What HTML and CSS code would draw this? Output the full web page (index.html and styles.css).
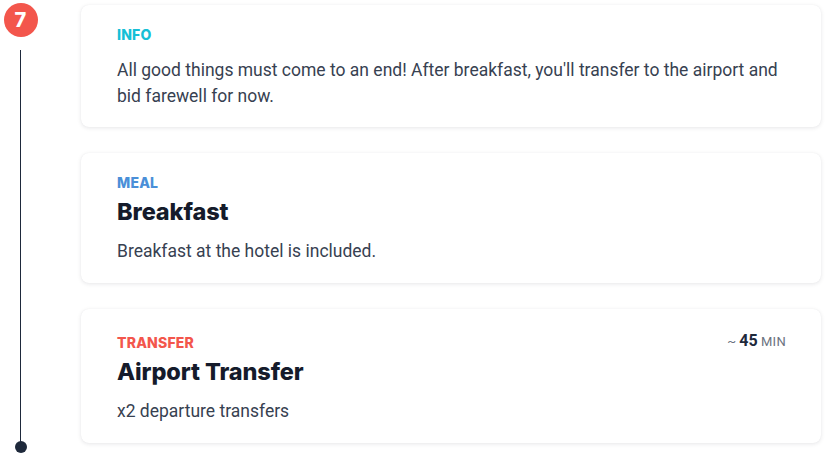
FILE: index.html
```html
<!DOCTYPE html>
<html>
<head>
<meta charset="utf-8">
<link rel="stylesheet" href="styles.css">
</head>
<body>
<div class="day">
  <div class="timeline">
    <div class="badge">7</div>
    <div class="line"></div>
    <div class="dot"></div>
  </div>
  <div class="cards">
    <div class="card">
      <div class="card-head"><span class="label info">Info</span></div>
      <p class="text">All good things must come to an end! After breakfast, you'll transfer to the airport and bid farewell for now.</p>
    </div>
    <div class="card">
      <div class="card-head"><span class="label meal">Meal</span></div>
      <h2 class="title">Breakfast</h2>
      <p class="text">Breakfast at the hotel is included.</p>
    </div>
    <div class="card">
      <div class="card-head">
        <span class="label transfer">Transfer</span>
        <span class="duration"><span class="tilde">~</span> <b>45</b> <span class="unit">min</span></span>
      </div>
      <h2 class="title">Airport Transfer</h2>
      <p class="text">x2 departure transfers</p>
    </div>
  </div>
</div>
</body>
</html>
```
FILE: styles.css
```css
html, body {
  margin: 0;
  padding: 0;
  background: #ffffff;
}
body {
  font-family: Roboto, "Liberation Sans", sans-serif;
  color: #374151;
}
.day {
  display: flex;
  align-items: stretch;
  padding-top: 3px;
}
.timeline {
  width: 41px;
  display: flex;
  flex-direction: column;
  align-items: center;
  padding-bottom: 18px;
}
.badge {
  width: 34px;
  height: 34px;
  border-radius: 50%;
  background: #f3564c;
  color: #ffffff;
  font-family: Inter, "Noto Sans", sans-serif;
  font-weight: 800;
  font-size: 20px;
  line-height: 34px;
  text-align: center;
}
.line {
  flex: 1;
  width: 1.5px;
  background: #1e293b;
  margin-top: 13px;
}
.dot {
  width: 12px;
  height: 12px;
  border-radius: 50%;
  background: #1e293b;
  margin-top: -1px;
}
.cards {
  margin-left: 40px;
  width: 740px;
  display: flex;
  flex-direction: column;
  gap: 26px;
  padding-top: 2px;
  padding-bottom: 28px;
}
.card {
  background: #ffffff;
  border-radius: 8px;
  box-shadow: 0 1px 4px rgba(15, 23, 42, 0.10), 0 0 1px rgba(15, 23, 42, 0.06);
  padding: 20px 30px 18px 36px;
}
.card-head {
  display: flex;
  justify-content: space-between;
  align-items: flex-end;
  min-height: 20px;
}
.label {
  font-family: Inter, "Noto Sans", sans-serif;
  font-weight: 800;
  font-size: 14px;
  line-height: 20px;
  text-transform: uppercase;
  letter-spacing: 0.2px;
}
.info { color: #16bfd6; }
.meal { color: #4a8fd8; }
.transfer { color: #f3564c; }
.duration {
  font-size: 13px;
  color: #6b7280;
  text-transform: uppercase;
  line-height: 23px;
  margin-right: 5px;
}
.duration b {
  font-size: 16px;
  color: #1e293b;
  font-weight: 700;
}
.unit { letter-spacing: 0.3px; }
.title {
  margin: 4px 0 0 0;
  font-family: Inter, "Noto Sans", sans-serif;
  font-weight: 800;
  font-size: 23.5px;
  line-height: 30px;
  color: #151b2b;
  letter-spacing: -0.1px;
}
.text {
  margin: 12px 0 0 0;
  font-size: 17.5px;
  line-height: 26px;
  color: #374151;
}
.title + .text {
  margin-top: 11px;
  margin-bottom: 1px;
}
```
